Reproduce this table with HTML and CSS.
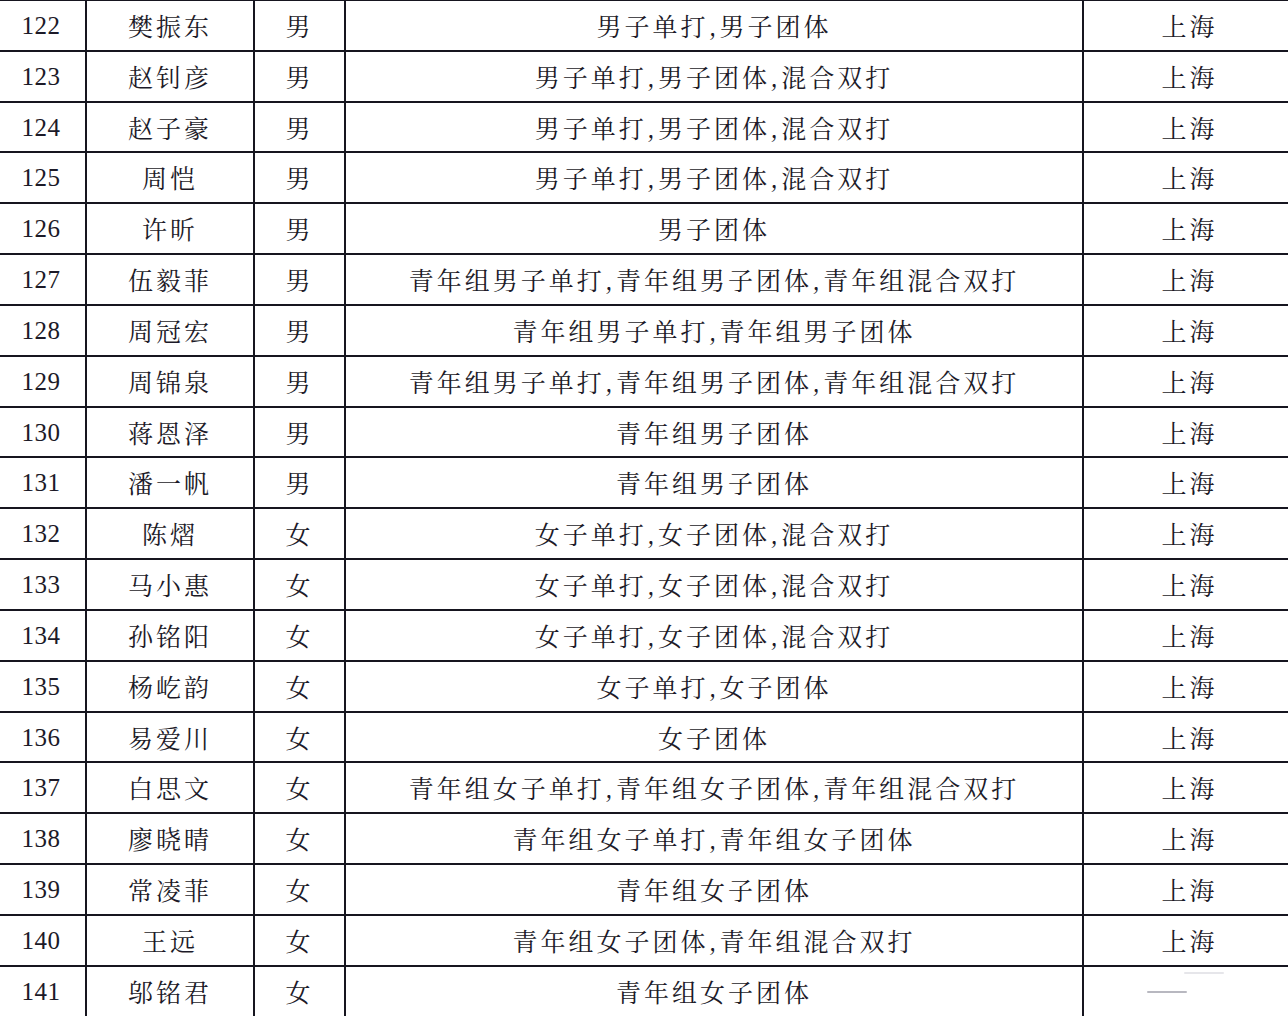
FILE: index.html
```html
<!DOCTYPE html>
<html lang="zh">
<head>
<meta charset="utf-8">
<link rel="stylesheet" href="styles.css">
</head>
<body>
<table class="roster">
<colgroup>
<col class="c-no"><col class="c-name"><col class="c-sex"><col class="c-event"><col class="c-place">
</colgroup>
<tbody>
<tr><td class="no">122</td><td>樊振东</td><td>男</td><td>男子单打,男子团体</td><td>上海</td></tr>
<tr><td class="no">123</td><td>赵钊彦</td><td>男</td><td>男子单打,男子团体,混合双打</td><td>上海</td></tr>
<tr><td class="no">124</td><td>赵子豪</td><td>男</td><td>男子单打,男子团体,混合双打</td><td>上海</td></tr>
<tr><td class="no">125</td><td>周恺</td><td>男</td><td>男子单打,男子团体,混合双打</td><td>上海</td></tr>
<tr><td class="no">126</td><td>许昕</td><td>男</td><td>男子团体</td><td>上海</td></tr>
<tr><td class="no">127</td><td>伍毅菲</td><td>男</td><td>青年组男子单打,青年组男子团体,青年组混合双打</td><td>上海</td></tr>
<tr><td class="no">128</td><td>周冠宏</td><td>男</td><td>青年组男子单打,青年组男子团体</td><td>上海</td></tr>
<tr><td class="no">129</td><td>周锦泉</td><td>男</td><td>青年组男子单打,青年组男子团体,青年组混合双打</td><td>上海</td></tr>
<tr><td class="no">130</td><td>蒋恩泽</td><td>男</td><td>青年组男子团体</td><td>上海</td></tr>
<tr><td class="no">131</td><td>潘一帆</td><td>男</td><td>青年组男子团体</td><td>上海</td></tr>
<tr><td class="no">132</td><td>陈熠</td><td>女</td><td>女子单打,女子团体,混合双打</td><td>上海</td></tr>
<tr><td class="no">133</td><td>马小惠</td><td>女</td><td>女子单打,女子团体,混合双打</td><td>上海</td></tr>
<tr><td class="no">134</td><td>孙铭阳</td><td>女</td><td>女子单打,女子团体,混合双打</td><td>上海</td></tr>
<tr><td class="no">135</td><td>杨屹韵</td><td>女</td><td>女子单打,女子团体</td><td>上海</td></tr>
<tr><td class="no">136</td><td>易爱川</td><td>女</td><td>女子团体</td><td>上海</td></tr>
<tr><td class="no">137</td><td>白思文</td><td>女</td><td>青年组女子单打,青年组女子团体,青年组混合双打</td><td>上海</td></tr>
<tr><td class="no">138</td><td>廖晓晴</td><td>女</td><td>青年组女子单打,青年组女子团体</td><td>上海</td></tr>
<tr><td class="no">139</td><td>常凌菲</td><td>女</td><td>青年组女子团体</td><td>上海</td></tr>
<tr><td class="no">140</td><td>王远</td><td>女</td><td>青年组女子团体,青年组混合双打</td><td>上海</td></tr>
<tr><td class="no">141</td><td>邬铭君</td><td>女</td><td>青年组女子团体</td><td class="smudged"><span class="smudge smudge-a"></span><span class="smudge smudge-b"></span></td></tr>
</tbody>
</table>
</body>
</html>
```
FILE: styles.css
```css
html, body {
  margin: 0;
  padding: 0;
  background: #ffffff;
  overflow: hidden;
}

.roster {
  border-collapse: collapse;
  table-layout: fixed;
  width: 1298px;
  margin: -1px 0 0 -3px;
  color: #1c1a28;
  font-family: "Noto Serif CJK SC", "Noto Sans CJK SC", "Liberation Serif", serif;
  font-size: 25px;
}

.c-no { width: 88px; }
.c-name { width: 168px; }
.c-sex { width: 91px; }
.c-event { width: 738px; }
.c-place { width: 213px; }

.roster tr {
  height: 50.83px;
}

.roster td {
  border: 2.5px solid #16151f;
  padding: 0;
  text-align: center;
  vertical-align: middle;
  letter-spacing: 3px;
  line-height: 1;
  white-space: nowrap;
  overflow: hidden;
}

.roster td.no {
  font-family: "Liberation Serif", serif;
  font-size: 25px;
  letter-spacing: 0.5px;
  padding-right: 2px;
}

.smudged {
  position: relative;
}

.smudge {
  position: absolute;
  height: 2px;
  border-radius: 1px;
  background: #c9c9cf;
}

.smudge-a {
  left: 63px;
  top: 24px;
  width: 40px;
  background: #b8b8c0;
}

.smudge-b {
  left: 100px;
  top: 5px;
  width: 40px;
  background: #e6e6ea;
}
```
